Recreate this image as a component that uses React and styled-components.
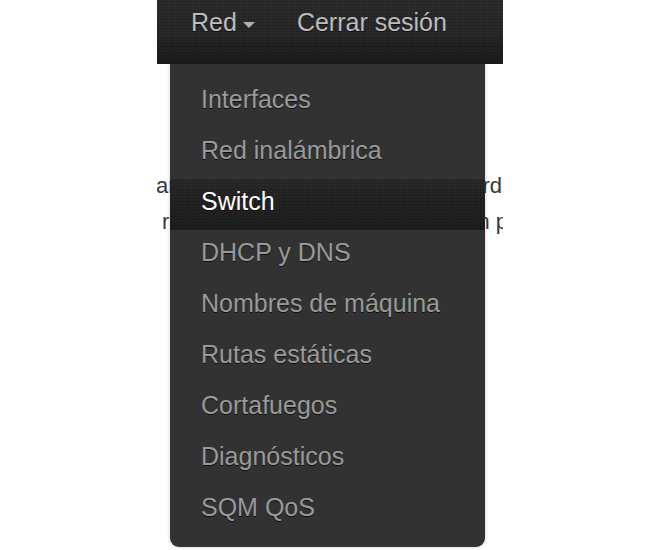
import React from "react";
import styled, { createGlobalStyle } from "styled-components";

const Global = createGlobalStyle`
  html, body { margin: 0; padding: 0; background: #fff; }
  body { font-family: "Liberation Sans", Arial, sans-serif; }
`;

const Viewport = styled.div`
  position: relative;
  margin-left: 157px;
  width: 346px;
  height: 550px;
  overflow: hidden;
  background: #fff;
`;

const dots = `
  radial-gradient(rgba(0,0,0,0.28) 0.7px, transparent 1.1px)
`;

const NavBar = styled.nav`
  display: flex;
  align-items: flex-start;
  height: 64px;
  padding-left: 13px;
  box-sizing: border-box;
  background-image: ${dots},
    linear-gradient(#2c2c2c 0%, #282828 55%, #212121 75%, #1c1c1c 100%);
  background-size: 3px 3px, 100% 100%;
  position: relative;
  z-index: 2;
`;

const NavItem = styled.div`
  position: relative;
  display: flex;
  align-items: center;
  padding: 10px 21px 0;
  font-size: 25px;
  line-height: 25px;
  color: #bdbdbd;
  text-shadow: 0 1px 0 rgba(0, 0, 0, 0.6);
  white-space: nowrap;
`;

const Caret = styled.span`
  display: inline-block;
  width: 0;
  height: 0;
  margin-left: 6px;
  margin-top: 5px;
  border-left: 6.5px solid transparent;
  border-right: 6.5px solid transparent;
  border-top: 6px solid #b0b0b0;
`;

const Dropdown = styled.ul`
  position: absolute;
  top: 64px;
  left: 0;
  width: 315px;
  margin: 0;
  padding: 13px 0 11px;
  list-style: none;
  background: #323232;
  border-radius: 0 0 9px 9px;
  box-shadow: 0 0 3px 1px rgba(0, 0, 0, 0.13);
  z-index: 3;
`;

const MenuItem = styled.li`
  height: 51px;
  box-sizing: border-box;
  padding: 10px 31px 0;
  font-size: 25px;
  line-height: 25px;
  color: ${(p) => (p.$active ? "#ffffff" : "#9a9a9a")};
  text-shadow: 0 1px 0 rgba(0, 0, 0, 0.7);
  white-space: nowrap;
  background-image: ${(p) =>
    p.$active
      ? `${dots}, linear-gradient(#2a2a2a 0%, #242424 40%, #1e1e1e 100%)`
      : "none"};
  background-size: 3px 3px, 100% 100%;
`;

const Content = styled.div`
  padding-top: 104px;
  font-size: 22px;
  line-height: 36px;
  color: #383838;
`;

const Line = styled.div`
  display: flex;
  justify-content: space-between;
  margin-left: ${(p) => p.$offset || 0}px;
  margin-right: ${(p) => p.$rightOffset || 0}px;
  white-space: nowrap;
`;

const items = [
  "Interfaces",
  "Red inalámbrica",
  "Switch",
  "DHCP y DNS",
  "Nombres de máquina",
  "Rutas estáticas",
  "Cortafuegos",
  "Diagnósticos",
  "SQM QoS",
];

export default function App() {
  return (
    <>
      <Global />
      <Viewport>
        <NavBar>
          <NavItem>
            Red
            <Caret />
            <Dropdown>
              {items.map((it) => (
                <MenuItem key={it} $active={it === "Switch"}>
                  {it}
                </MenuItem>
              ))}
            </Dropdown>
          </NavItem>
          <NavItem>Cerrar sesión</NavItem>
        </NavBar>
        <Content>
          <Line $offset={-1} $rightOffset={1}>
            <span>ar</span>
            <span>rd</span>
          </Line>
          <Line $offset={5} $rightOffset={-5}>
            <span>r</span>
            <span>n p</span>
          </Line>
        </Content>
      </Viewport>
    </>
  );
}
